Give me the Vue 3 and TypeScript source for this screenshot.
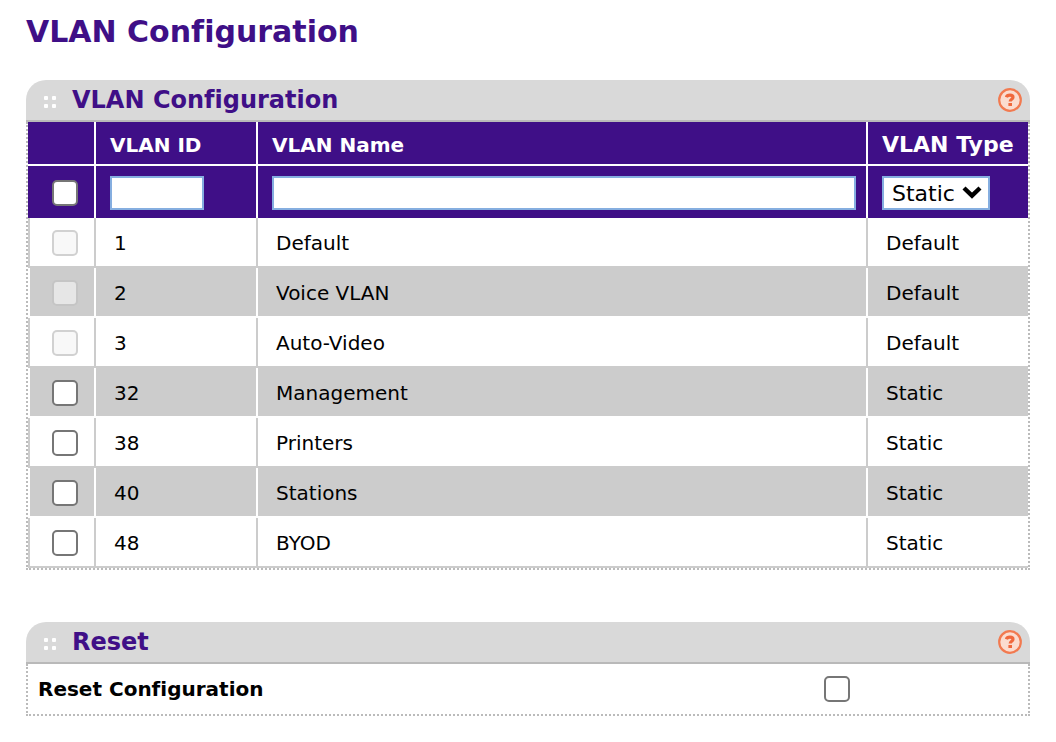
<script setup lang="ts">
import { computed, ref } from 'vue'

interface Vlan {
  id: number
  name: string
  type: 'Default' | 'Static'
}

const vlans: Vlan[] = [
  { id: 1, name: 'Default', type: 'Default' },
  { id: 2, name: 'Voice VLAN', type: 'Default' },
  { id: 3, name: 'Auto-Video', type: 'Default' },
  { id: 32, name: 'Management', type: 'Static' },
  { id: 38, name: 'Printers', type: 'Static' },
  { id: 40, name: 'Stations', type: 'Static' },
  { id: 48, name: 'BYOD', type: 'Static' },
]

const selected = ref<number[]>([])
const newId = ref('')
const newName = ref('')
const newType = ref('Static')
const resetConfig = ref(false)

const editable = vlans.filter((v) => v.type !== 'Default').map((v) => v.id)
const allSelected = computed({
  get: () => selected.value.length === editable.length,
  set: (on: boolean) => {
    selected.value = on ? [...editable] : []
  },
})
</script>

<template>
  <main class="page">
    <h1>VLAN Configuration</h1>

    <section class="panel">
      <header class="panel-head">
        <span class="grip"><i></i><i></i><i></i><i></i></span>
        <h2>VLAN Configuration</h2>
        <button type="button" class="help" aria-label="Help for VLAN configuration">
          <svg viewBox="0 0 24 24" width="24" height="24">
            <circle cx="12" cy="12" r="10.8" fill="#fbdccf" stroke="#f27a50" stroke-width="2.2" />
            <path d="M8.4 9.2C8.8 7.8 10 7.2 12 7.2c2 0 3 .8 3 2.1 0 2-2.8 1.9-2.8 4.2" fill="none" stroke="#f0683c" stroke-width="3.2" />
            <rect x="10.4" y="15" width="3.6" height="3" fill="#f0683c" />
          </svg>
        </button>
      </header>
      <div class="panel-body">
        <table>
          <colgroup>
            <col class="col-check" />
            <col class="col-id" />
            <col />
            <col class="col-type" />
          </colgroup>
          <thead>
            <tr class="titles">
              <td></td>
              <th scope="col">VLAN ID</th>
              <th scope="col">VLAN Name</th>
              <th scope="col" class="large">VLAN Type</th>
            </tr>
            <tr class="entry">
              <td class="check"><input v-model="allSelected" type="checkbox" aria-label="Select all VLANs" /></td>
              <td><input v-model="newId" type="text" class="field id-field" aria-label="VLAN ID" /></td>
              <td><input v-model="newName" type="text" class="field" aria-label="VLAN Name" /></td>
              <td>
                <div class="select">
                  <select v-model="newType" aria-label="VLAN Type">
                    <option>Static</option>
                    <option>Dynamic</option>
                  </select>
                  <svg viewBox="0 0 20 14" width="20" height="14">
                    <path d="M2 2l8 7.6L18 2" fill="none" stroke="#000" stroke-width="4.4" />
                  </svg>
                </div>
              </td>
            </tr>
          </thead>
          <tbody>
            <tr v-for="v in vlans" :key="v.id">
              <td class="check">
                <input
                  v-model="selected"
                  type="checkbox"
                  :value="v.id"
                  :disabled="v.type === 'Default'"
                  :aria-label="`Select VLAN ${v.id}`"
                />
              </td>
              <td>{{ v.id }}</td>
              <td>{{ v.name }}</td>
              <td>{{ v.type }}</td>
            </tr>
          </tbody>
        </table>
      </div>
    </section>

    <section class="panel">
      <header class="panel-head">
        <span class="grip"><i></i><i></i><i></i><i></i></span>
        <h2>Reset</h2>
        <button type="button" class="help" aria-label="Help for reset">
          <svg viewBox="0 0 24 24" width="24" height="24">
            <circle cx="12" cy="12" r="10.8" fill="#fbdccf" stroke="#f27a50" stroke-width="2.2" />
            <path d="M8.4 9.2C8.8 7.8 10 7.2 12 7.2c2 0 3 .8 3 2.1 0 2-2.8 1.9-2.8 4.2" fill="none" stroke="#f0683c" stroke-width="3.2" />
            <rect x="10.4" y="15" width="3.6" height="3" fill="#f0683c" />
          </svg>
        </button>
      </header>
      <div class="panel-body reset-row">
        <label for="reset-config">Reset Configuration</label>
        <input id="reset-config" v-model="resetConfig" type="checkbox" />
      </div>
    </section>
  </main>
</template>

<style>
body {
  margin: 0;
  background: #fff;
}
</style>

<style scoped>
* {
  box-sizing: border-box;
}

.page {
  padding: 12px 26px 26px;
  font: 20px/24px Verdana, "DejaVu Sans", sans-serif;
  font-variant-ligatures: none;
  color: #000;
}

h1,
h2 {
  margin: 0;
  color: #3f0f87;
  font-weight: bold;
  line-height: 40px;
}

h1 {
  font-size: 30px;
  margin-bottom: 28px;
}

h2 {
  font-size: 24px;
  flex: 1;
}

.panel + .panel {
  margin-top: 52px;
}

.panel-head {
  display: flex;
  align-items: center;
  padding: 0 8px 0 18px;
  background: #d9d9d9;
  border-bottom: 2px solid #b9b9b9;
  border-radius: 20px 20px 0 0;
}

.grip {
  display: grid;
  grid-template-columns: 4px 4px;
  gap: 4px;
  margin: 4px 16px 0 0;
}

.grip i {
  height: 4px;
  border-radius: 1px;
  background: #fff;
}

.help {
  display: block;
  padding: 0;
  border: 0;
  background: none;
  cursor: pointer;
}

.help svg {
  display: block;
}

.panel-body {
  border: 2px dotted #bbb;
  border-top: 0;
}

table {
  width: 100%;
  table-layout: fixed;
  border-collapse: separate;
  border-spacing: 0;
}

.col-check {
  width: 66px;
}

.col-id,
.col-type {
  width: 162px;
}

th,
td {
  padding: 0;
  text-align: left;
  vertical-align: top;
}

thead {
  background: #3f0f87;
  color: #fff;
}

thead th,
thead td {
  padding: 10px 10px 8px 14px;
  border-left: 2px solid #fff;
}

thead td:first-child {
  border-left: 0;
}

.titles th,
.titles td {
  padding-top: 11px;
  padding-bottom: 7px;
  border-bottom: 2px solid #fff;
}

.large {
  font-size: 22px;
}

tbody td {
  padding: 13px 10px 11px 18px;
  border-left: 2px solid #ccc;
  border-bottom: 2px solid #ccc;
}

tbody tr:nth-child(even) td {
  background: #ccc;
  border-color: #fff;
}

thead .check {
  padding: 14px 0 12px 24px;
}

tbody .check {
  padding: 12px 0 10px 22px;
}

input[type="checkbox"] {
  appearance: none;
  display: block;
  width: 26px;
  height: 26px;
  margin: 0;
  border: 2px solid #767676;
  border-radius: 5px;
  background: #fff;
}

input[type="checkbox"]:checked {
  background: #767676;
}

input[type="checkbox"]:disabled {
  border-color: rgba(118, 118, 118, 0.3);
  background: rgba(244, 244, 244, 0.65);
}

.field,
select {
  display: block;
  width: 100%;
  height: 34px;
  margin: 0;
  border: 2px solid #85aee0;
  border-radius: 0;
  background: #fff;
  color: #000;
  font: inherit;
}

.field {
  padding: 0 6px;
}

.id-field {
  width: 94px;
}

.select {
  display: grid;
  width: 108px;
  align-items: center;
}

.select > * {
  grid-area: 1 / 1;
}

select {
  appearance: none;
  padding: 2px 8px 0;
  font-size: 22px;
}

.select svg {
  justify-self: end;
  margin-right: 8px;
  pointer-events: none;
}

.reset-row {
  display: grid;
  grid-template-columns: 4fr 1fr;
  align-items: center;
  padding: 12px 10px;
  font-weight: bold;
}

.reset-row input {
  margin-left: 2px;
}
</style>
